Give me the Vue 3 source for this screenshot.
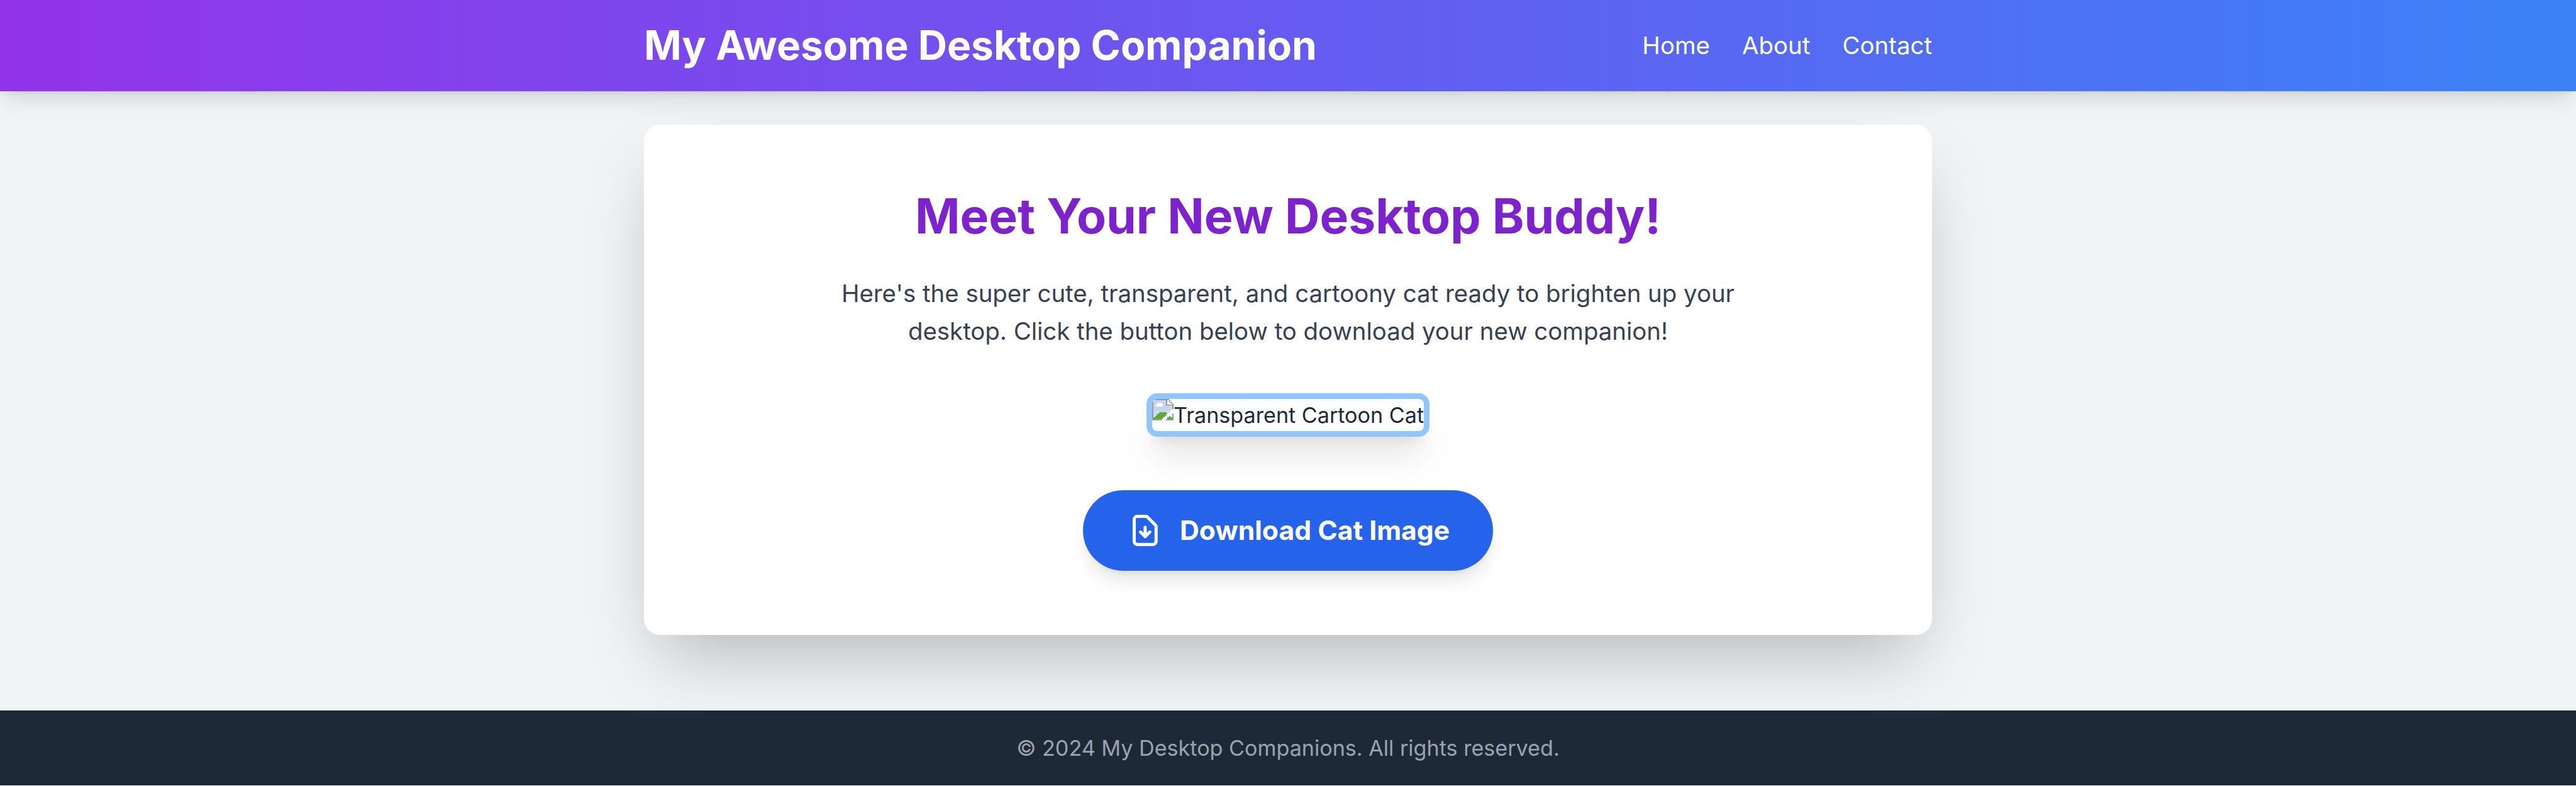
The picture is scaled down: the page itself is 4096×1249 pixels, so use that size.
<script setup>
const links = ['Home', 'About', 'Contact']
</script>

<template>
  <div class="page">
    <header class="header">
      <div class="container bar">
        <h1 class="brand">My Awesome Desktop Companion</h1>
        <nav class="nav">
          <a v-for="link in links" :key="link" class="link">{{ link }}</a>
        </nav>
      </div>
    </header>

    <main class="main">
      <section class="container card">
        <h2 class="title">Meet Your New Desktop Buddy!</h2>
        <p class="lead">
          Here's the super cute, transparent, and cartoony cat ready to brighten up your<br />
          desktop. Click the button below to download your new companion!
        </p>
        <div class="picture">
          <svg class="missing" viewBox="0 0 14 14" shape-rendering="crispEdges">
            <defs>
              <linearGradient id="sky" x1="0" y1="0" x2="0" y2="1">
                <stop offset="0" stop-color="#c5d5f5" />
                <stop offset="0.5" stop-color="#c3d3f3" />
                <stop offset="1" stop-color="#d9e4fa" />
              </linearGradient>
            </defs>
            <path fill="#fff" d="M0 0h10l4 4v10H0z" />
            <path fill="url(#sky)" d="M1 1h8v4h4v3L7 13H1z" />
            <path fill="#fff" d="M2 4h1V3h1V2.500h2V3h1v2H2z" />
            <path fill="#58ab36" d="M1 13v-1h1v-1h1v-1h1V9h1V8.500h4V9h1v1H9v1H8v1H7v1zM11 11h1v1h1v1h-3v-1h1z" />
            <path fill="#fff" d="M6 14v-1h1v-1h1v-1h1v-1h1V9h1V8h1V7h2v2h-1v1h-1v1h-1v1h-1v1H9v1z" />
            <path fill="#9b9b9b" d="M0 0h10v1H1v12h5v1H0zM9 1h1v2.500h3V4.500H9zM10 0h1v1h-1zM11 1h1v1h-1zM12 2h1v1h-1zM13 3h1v3.500h-1zM13 9.500h1V14H9v-1h4z" />
          </svg>
          <span>Transparent Cartoon Cat</span>
        </div>
        <button class="button" type="button">
          <svg class="icon" viewBox="0 0 24 24" fill="none" stroke="currentColor" stroke-width="2" stroke-linecap="round" stroke-linejoin="round">
            <path d="M12 10v6m0 0l-3-3m3 3l3-3m2 8H7a2 2 0 01-2-2V5a2 2 0 012-2h5.586a1 1 0 01.707.293l5.414 5.414a1 1 0 01.293.707V19a2 2 0 01-2 2z" />
          </svg>
          <span>Download Cat Image</span>
        </button>
      </section>
    </main>

    <footer class="footer">© 2024 My Desktop Companions. All rights reserved.</footer>
  </div>
</template>

<style>
html {
  font-size: 34.13333px;
  background: #f0f4f7;
}
</style>

<style scoped>
.page {
  display: flex;
  flex-direction: column;
  height: 36.5625rem;
  overflow: hidden;
  font-family: Inter, "Liberation Sans", sans-serif;
  font-size: 1rem;
  line-height: 1.5rem;
  color: #1f2937;
  white-space: nowrap;
}
.container {
  width: 60rem;
  margin: 0 auto;
}
.header {
  padding: 1rem 0;
  color: #fff;
  background: linear-gradient(to right, #9333ea, #3b82f6);
  box-shadow: 0 0.625rem 0.9375rem -0.1875rem rgba(0, 0, 0, 0.1), 0 0.25rem 0.375rem -0.25rem rgba(0, 0, 0, 0.1);
}
.bar {
  display: flex;
  align-items: center;
  justify-content: space-between;
}
.brand {
  margin: 0;
  font-size: 1.875rem;
  line-height: 2.25rem;
  font-weight: 700;
}
.nav {
  display: flex;
  gap: 1.5rem;
}
.link {
  font-size: 1.125rem;
  line-height: 1.75rem;
}
.main {
  flex: 1;
  padding-top: 1.5625rem;
}
.card {
  box-sizing: border-box;
  display: flex;
  flex-direction: column;
  align-items: center;
  height: 23.75rem;
  padding: 3rem;
  text-align: center;
  background: #fff;
  border-radius: 0.75rem;
  box-shadow: 0 1.5625rem 3.125rem -0.75rem rgba(0, 0, 0, 0.25);
}
.title {
  margin: 0 0 1.5rem;
  font-size: 2.25rem;
  line-height: 2.5rem;
  font-weight: 700;
  color: #7e22ce;
}
.lead {
  margin: 0 0 2rem;
  font-size: 1.125rem;
  line-height: 1.75rem;
  color: #374151;
}
.picture {
  display: flex;
  align-items: flex-start;
  height: 1.5rem;
  margin-bottom: 2.475rem;
  overflow: hidden;
  border: 9px solid #93c5fd;
  border-radius: 0.5rem;
  box-shadow: 0 1.25rem 1.5625rem -0.3125rem rgba(0, 0, 0, 0.1), 0 0.5rem 0.625rem -0.375rem rgba(0, 0, 0, 0.1);
}
.missing {
  width: 1rem;
  height: 1rem;
}
.button {
  display: flex;
  align-items: center;
  gap: 0.75rem;
  padding: 1rem 2rem;
  border: 0;
  border-radius: 999rem;
  font: 700 1.25rem/1.75rem Inter, "Liberation Sans", sans-serif;
  color: #fff;
  background: #2563eb;
  box-shadow: 0 0.625rem 0.9375rem -0.1875rem rgba(0, 0, 0, 0.1), 0 0.25rem 0.375rem -0.25rem rgba(0, 0, 0, 0.1);
}
.icon {
  width: 1.75rem;
  height: 1.75rem;
}
.footer {
  position: relative;
  padding: 1rem 0;
  text-align: center;
  color: #9ca3af;
  background: #1e2937;
}
</style>
